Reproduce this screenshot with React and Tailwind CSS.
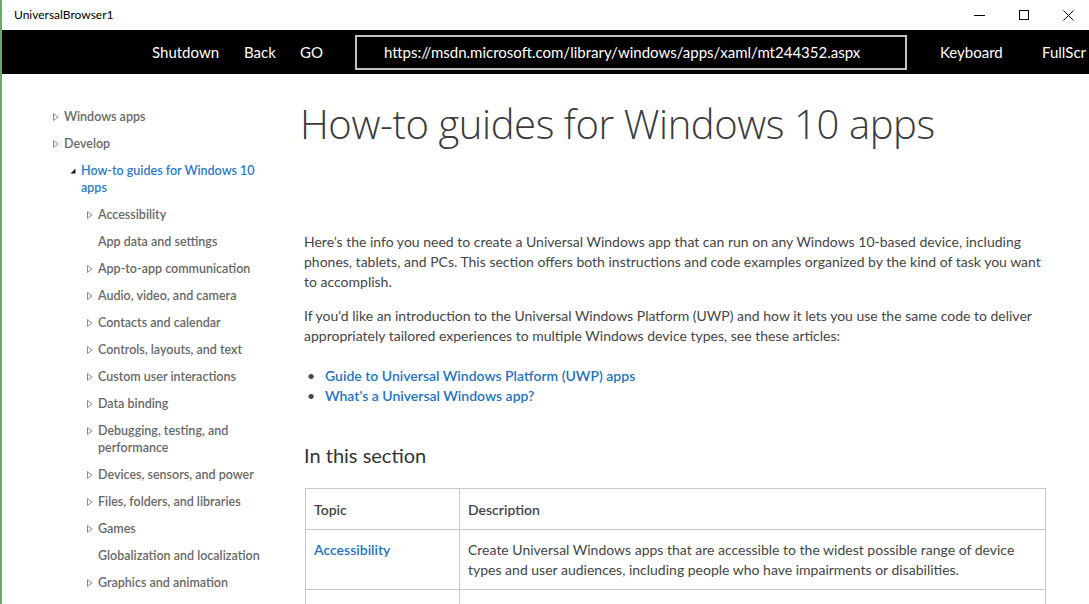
import React from 'react';

const FONT = "font-['Segoe_UI','Lato','Noto_Sans',sans-serif]";

function Tri({ open }) {
  if (open) {
    return (
      <svg width="6" height="6" viewBox="0 0 6 6" className="mt-[6px]">
        <polygon points="5.5,0.5 5.5,5.5 0.5,5.5" fill="#1a1a1a" />
      </svg>
    );
  }
  return (
    <svg width="6" height="8" viewBox="0 0 6 8" className="mt-[5px]">
      <polygon points="0.5,0.5 5,4 0.5,7.5" fill="none" stroke="#8a8a8a" strokeWidth="1" />
    </svg>
  );
}

const tree = [
  { level: 0, tri: 'closed', lines: ['Windows apps'] },
  { level: 0, tri: 'closed', lines: ['Develop'] },
  { level: 1, tri: 'open', lines: ['How-to guides for Windows 10', 'apps'], active: true },
  { level: 2, tri: 'closed', lines: ['Accessibility'] },
  { level: 2, tri: null, lines: ['App data and settings'] },
  { level: 2, tri: 'closed', lines: ['App-to-app communication'] },
  { level: 2, tri: 'closed', lines: ['Audio, video, and camera'] },
  { level: 2, tri: 'closed', lines: ['Contacts and calendar'] },
  { level: 2, tri: 'closed', lines: ['Controls, layouts, and text'] },
  { level: 2, tri: 'closed', lines: ['Custom user interactions'] },
  { level: 2, tri: 'closed', lines: ['Data binding'] },
  { level: 2, tri: 'closed', lines: ['Debugging, testing, and', 'performance'] },
  { level: 2, tri: 'closed', lines: ['Devices, sensors, and power'] },
  { level: 2, tri: 'closed', lines: ['Files, folders, and libraries'] },
  { level: 2, tri: 'closed', lines: ['Games'] },
  { level: 2, tri: null, lines: ['Globalization and localization'] },
  { level: 2, tri: 'closed', lines: ['Graphics and animation'] },
];

const indents = ['ml-[51px]', 'ml-[68px]', 'ml-[85px]'];

function TitleBar() {
  return (
    <div className="h-[30px] flex items-center justify-between bg-white">
      <span className="pl-[12px] text-[12px] text-black">UniversalBrowser1</span>
      <div className="flex items-center gap-[34px] pr-[15px]">
        <svg width="11" height="10" viewBox="0 0 11 10">
          <line x1="0" y1="5.5" x2="11" y2="5.5" stroke="#000" strokeWidth="1" />
        </svg>
        <svg width="10" height="10" viewBox="0 0 10 10">
          <rect x="0.5" y="0.5" width="9" height="9" fill="none" stroke="#000" strokeWidth="1" />
        </svg>
        <svg width="11" height="11" viewBox="0 0 11 11">
          <path d="M0.5 0.5 L10.5 10.5 M10.5 0.5 L0.5 10.5" stroke="#000" strokeWidth="1" />
        </svg>
      </div>
    </div>
  );
}

function NavBar() {
  return (
    <div className="h-[44px] bg-black flex items-center text-white text-[15px] whitespace-nowrap overflow-hidden">
      <span className="ml-[150px] w-[92px]">Shutdown</span>
      <span className="w-[56px]">Back</span>
      <span className="w-[55px]">GO</span>
      <div className="w-[552px] h-[35px] border-2 border-[#c2c2c2] flex items-center pl-[27px]">
        https://msdn.microsoft.com/library/windows/apps/xaml/mt244352.aspx
      </div>
      <span className="ml-[33px] w-[102px]">Keyboard</span>
      <span>FullScr</span>
    </div>
  );
}

function Sidebar() {
  return (
    <aside className="w-[268px] shrink-0 pt-[34px] flex flex-col gap-[10px]">
      {tree.map((item, i) => (
        <div key={i} className={`flex items-start ${indents[item.level]}`}>
          <span className="w-[11px] shrink-0 flex">
            {item.tri && <Tri open={item.tri === 'open'} />}
          </span>
          <span
            className={`text-[12.5px] leading-[17px] font-semibold whitespace-nowrap ${
              item.active ? 'text-[#2a7bc4]' : 'text-[#686868]'
            }`}
          >
            {item.lines.map((l, j) => (
              <div key={j}>{l}</div>
            ))}
          </span>
        </div>
      ))}
    </aside>
  );
}

function Main() {
  return (
    <main className="flex-1 pl-[32px] pr-[43px] pt-[26px]">
      <h1 className="font-['Open_Sans',sans-serif] font-light text-[40px] leading-[48px] text-[#3b3b3b] tracking-[-0.01em] -ml-[2px]">
        How-to guides for Windows 10 apps
      </h1>

      <div className="text-[14px] leading-[20px] text-[#454545] ml-[2px]">
        <p className="mt-[84px]">
          Here’s the info you need to create a Universal Windows app that can run on any Windows 10-based device, including
          phones, tablets, and PCs. This section offers both instructions and code examples organized by the kind of task you want
          to accomplish.
        </p>
        <p className="mt-[14px]">
          If you'd like an introduction to the Universal Windows Platform (UWP) and how it lets you use the same code to deliver
          appropriately tailored experiences to multiple Windows device types, see these articles:
        </p>
        <ul className="mt-[20px]">
          {['Guide to Universal Windows Platform (UWP) apps', "What's a Universal Windows app?"].map((t) => (
            <li key={t} className="flex">
              <span className="w-[21px] pl-[3px] text-[#454545]">•</span>
              <span className="font-semibold text-[#1f73bf]">{t}</span>
            </li>
          ))}
        </ul>

        <h2 className="mt-[35px] text-[20px] leading-[28px] text-[#333]">In this section</h2>

        <table className="mt-[19px] w-[741px] ml-[1px] border-collapse border border-[#c8c8c8] text-left">
          <thead>
            <tr>
              <th className="w-[154px] border border-[#c8c8c8] px-[8px] pt-[11px] pb-[9px] font-semibold text-[#444]">Topic</th>
              <th className="border border-[#c8c8c8] px-[8px] pt-[11px] pb-[9px] font-semibold text-[#444]">Description</th>
            </tr>
          </thead>
          <tbody>
            <tr>
              <td className="border border-[#c8c8c8] px-[8px] pt-[10px] pb-[9px] align-top font-semibold text-[#1f73bf]">
                Accessibility
              </td>
              <td className="border border-[#c8c8c8] px-[8px] pt-[10px] pb-[9px] align-top">
                Create Universal Windows apps that are accessible to the widest possible range of device
                <br />
                types and user audiences, including people who have impairments or disabilities.
              </td>
            </tr>
            <tr>
              <td className="border border-[#c8c8c8] h-[60px]"></td>
              <td className="border border-[#c8c8c8]"></td>
            </tr>
          </tbody>
        </table>
      </div>
    </main>
  );
}

export default function App() {
  return (
    <div className={`w-[1089px] h-[604px] overflow-hidden bg-white border-l-2 border-[#5fae6a] ${FONT}`}>
      <TitleBar />
      <NavBar />
      <div className="flex">
        <Sidebar />
        <Main />
      </div>
    </div>
  );
}
